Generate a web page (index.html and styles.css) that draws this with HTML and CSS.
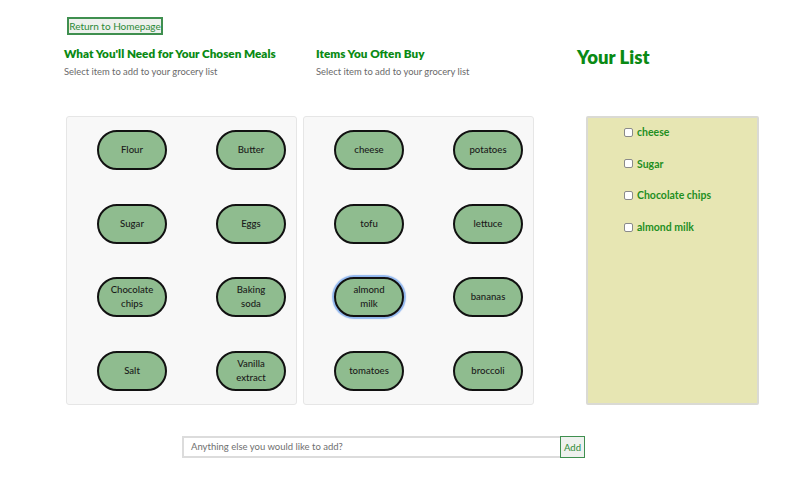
FILE: index.html
```html
<!DOCTYPE html>
<html>
<head>
<meta charset="utf-8">
<link rel="stylesheet" href="styles.css">
</head>
<body>
<div class="page">
  <div class="topbar">
    <button class="return-btn">Return to Homepage</button>
  </div>
  <div class="header-row">
    <div class="head head-meals">
      <h2 class="section-title">What You'll Need for Your Chosen Meals</h2>
      <p class="section-sub">Select item to add to your grocery list</p>
    </div>
    <div class="head head-often">
      <h2 class="section-title">Items You Often Buy</h2>
      <p class="section-sub">Select item to add to your grocery list</p>
    </div>
    <div class="head head-list">
      <h1 class="list-title">Your List</h1>
    </div>
  </div>
  <div class="panels-row">
    <div class="panel">
      <button class="pill">Flour</button>
      <button class="pill">Butter</button>
      <button class="pill">Sugar</button>
      <button class="pill">Eggs</button>
      <button class="pill">Chocolate chips</button>
      <button class="pill">Baking soda</button>
      <button class="pill">Salt</button>
      <button class="pill">Vanilla extract</button>
    </div>
    <div class="panel">
      <button class="pill">cheese</button>
      <button class="pill">potatoes</button>
      <button class="pill">tofu</button>
      <button class="pill">lettuce</button>
      <button class="pill pill-focus">almond milk</button>
      <button class="pill">bananas</button>
      <button class="pill">tomatoes</button>
      <button class="pill">broccoli</button>
    </div>
    <div class="list-panel">
      <ul class="list">
        <li class="list-item"><span class="check"></span>cheese</li>
        <li class="list-item"><span class="check"></span>Sugar</li>
        <li class="list-item"><span class="check"></span>Chocolate chips</li>
        <li class="list-item"><span class="check"></span>almond milk</li>
      </ul>
    </div>
  </div>
  <div class="addbar">
    <div class="add-input">Anything else you would like to add?</div>
    <button class="add-btn">Add</button>
  </div>
</div>
</body>
</html>
```
FILE: styles.css
```css
* { box-sizing: border-box; }
html, body { margin: 0; padding: 0; background: #fff; }
body {
  font-family: Lato, "Noto Sans", "Liberation Sans", sans-serif;
  color: #222;
  width: 806px;
  height: 481px;
  overflow: hidden;
}
button { font-family: inherit; cursor: pointer; }

.topbar { padding: 17px 0 0 67px; height: 35px; }
.return-btn {
  display: block;
  width: 96px;
  height: 18px;
  padding: 0;
  border: 2px solid #3f8f4f;
  background: #eef1ee;
  color: #2b8a36;
  font-size: 10px;
  line-height: 14px;
}

.header-row {
  display: flex;
  margin-top: 10px;
  padding-left: 64px;
  height: 34px;
}
.head-meals { width: 252px; }
.head-often { width: 261px; }
.section-title {
  margin: 0;
  font-size: 11.7px;
  line-height: 16px;
  font-weight: 800;
  color: #0a8a14;
  white-space: nowrap;
}
.section-sub {
  margin: 4px 0 0;
  font-size: 9.4px;
  line-height: 14px;
  color: #6a6a6a;
  white-space: nowrap;
}
.list-title {
  margin: 0;
  font-size: 18.5px;
  line-height: 24px;
  font-weight: 800;
  color: #0a8a14;
}

.panels-row {
  display: flex;
  margin-top: 37px;
  padding-left: 66px;
  height: 289px;
}
.panel {
  width: 231px;
  height: 289px;
  margin-right: 6px;
  background: #f8f8f8;
  border: 1px solid #e6e6e6;
  border-radius: 3px;
  display: grid;
  grid-template-columns: 70px 70px;
  grid-template-rows: repeat(4, 40px);
  column-gap: 49px;
  row-gap: 33.5px;
  padding: 13px 0 0 30px;
  align-content: start;
}
.pill {
  width: 70px;
  height: 40px;
  padding: 0 10px;
  border: 2px solid #111;
  border-radius: 20px;
  background: #8fbc8f;
  color: #1a1a1a;
  font-size: 9.6px;
  line-height: 14px;
  font-weight: 500;
}
.pill-focus {
  box-shadow: 0 0 1px 2px rgba(110, 160, 235, 0.75);
}

.list-panel {
  width: 173px;
  height: 289px;
  margin-left: 46px;
  background: #e7e6b3;
  border: 2px solid #dadad4;
  border-radius: 2px;
}
.list {
  list-style: none;
  margin: 0;
  padding: 7px 0 0 36px;
}
.list-item {
  display: flex;
  align-items: center;
  height: 14px;
  margin-bottom: 17.7px;
  font-size: 10.5px;
  font-weight: 700;
  color: #1f8f1f;
}
.check {
  width: 9px;
  height: 9px;
  margin-right: 4px;
  border: 1px solid #8a8a8a;
  border-radius: 2px;
  background: #fff;
  flex: none;
}

.addbar {
  display: flex;
  margin-top: 31px;
  padding-left: 182px;
  height: 22px;
}
.add-input {
  width: 378px;
  height: 22px;
  border: 2px solid #dcdcdc;
  border-right: none;
  background: #fff;
  color: #6f6f6f;
  font-size: 9.5px;
  line-height: 18px;
  padding-left: 7px;
}
.add-btn {
  width: 25px;
  height: 22px;
  padding: 0;
  border: 1px solid #3f8f4f;
  background: #eef1ee;
  color: #2b8a36;
  font-size: 9.5px;
}
```
